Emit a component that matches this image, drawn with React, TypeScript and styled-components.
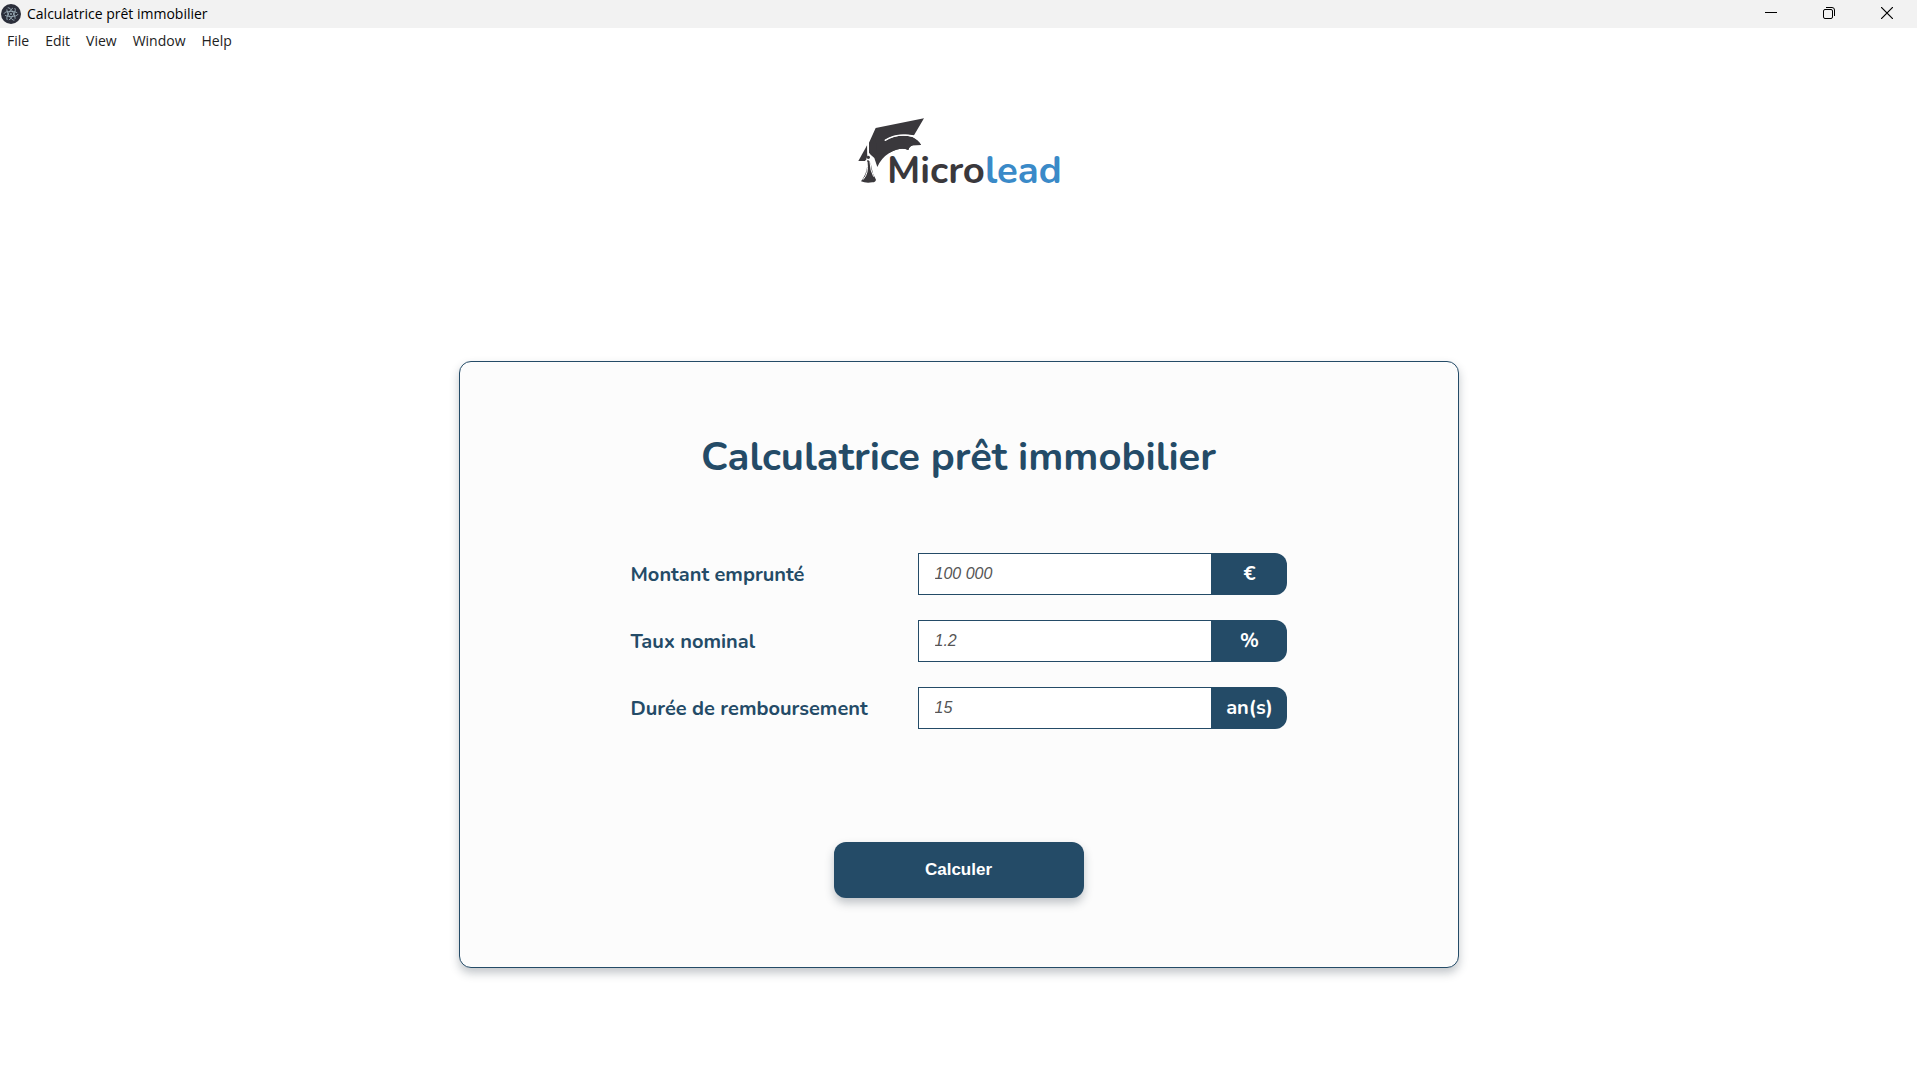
import React from "react";
import styled, { createGlobalStyle } from "styled-components";

const navy = "#244b67";
const display = `Nunito, "Noto Sans", sans-serif`;
const system = `"Segoe UI", "Open Sans", sans-serif`;

const GlobalStyle = createGlobalStyle`
  *, *::before, *::after { box-sizing: border-box; }
  body { margin: 0; background: #fff; }
  svg { display: block; }
`;

const TitleBar = styled.header`
  display: flex;
  align-items: center;
  justify-content: space-between;
  height: 28px;
  background: #f2f2f2;
  color: #000;
  font: 14px/20px ${system};
`;

const WindowTitle = styled.div`
  display: flex;
  align-items: center;
  gap: 6px;
  padding-left: 1px;
`;

const WindowControls = styled.div`
  display: flex;
  padding-right: 1px;
`;

const ControlButton = styled.button`
  display: grid;
  place-items: center;
  width: 58px;
  height: 28px;
  padding: 0 0 2px;
  border: 0;
  background: none;
`;

const MenuBar = styled.nav`
  display: flex;
  gap: 16px;
  padding: 2px 7px;
`;

const MenuButton = styled.button`
  padding: 0;
  border: 0;
  background: none;
  color: #222;
  font: 14px/22px ${system};
`;

const Page = styled.main`
  display: flex;
  flex-direction: column;
  align-items: center;
  padding: 58px 24px 48px;
`;

const Card = styled.section`
  display: flex;
  flex-direction: column;
  align-items: center;
  width: 100%;
  max-width: 1000px;
  margin-top: 157px;
  padding: 65px 24px 69px;
  border: 1px solid ${navy};
  border-radius: 12px;
  background: #fcfcfc;
  box-shadow: 0 5px 10px rgba(36, 50, 66, 0.28);
`;

const Heading = styled.h1`
  margin: 0;
  color: ${navy};
  font: 700 40px/60px ${display};
`;

const Form = styled.form`
  display: flex;
  flex-direction: column;
  align-items: center;
  margin-top: 66px;
`;

const Fields = styled.div`
  display: grid;
  gap: 25px;
`;

const Field = styled.div`
  display: grid;
  grid-template-columns: 237px 369px;
  column-gap: 50px;
  align-items: center;
`;

const Label = styled.label`
  padding-top: 2px;
  color: ${navy};
  font: 700 20px/28px ${display};
  white-space: nowrap;
`;

const InputGroup = styled.div`
  display: flex;
  height: 42px;
`;

const Input = styled.input`
  flex: 1;
  min-width: 0;
  padding: 0 16px;
  border: 1px solid ${navy};
  border-right: 0;
  border-radius: 0;
  background: #fff;
  font: italic 16px/20px "Liberation Sans", Arial, sans-serif;
  &::placeholder { color: #555; opacity: 1; }
`;

const Unit = styled.span`
  display: grid;
  place-items: center;
  width: 76px;
  padding-left: 2px;
  border-radius: 0 12px 12px 0;
  background: ${navy};
  color: #fff;
  font: 700 20px/28px ${display};
`;

const Submit = styled.button`
  width: 250px;
  height: 56px;
  margin-top: 113px;
  padding: 0;
  border: 0;
  border-radius: 12px;
  background: ${navy};
  color: #fff;
  font: 700 17px/20px "Liberation Sans", Arial, sans-serif;
  box-shadow: 0 5px 10px rgba(36, 50, 66, 0.28);
`;

const AppIcon = () => (
  <svg width="20" height="20" viewBox="0 0 20 20" aria-hidden="true">
    <circle cx="10" cy="10" r="10" fill="#2b2e3a" />
    <g fill="none" stroke="#9fb3bd" strokeWidth="0.8" strokeDasharray="14 2">
      <ellipse cx="10" cy="10" rx="7" ry="2.6" />
      <ellipse cx="10" cy="10" rx="7" ry="2.6" transform="rotate(60 10 10)" />
      <ellipse cx="10" cy="10" rx="7" ry="2.6" transform="rotate(120 10 10)" />
    </g>
    <circle cx="10" cy="10" r="0.9" fill="#9fb3bd" />
  </svg>
);

const Logo = () => (
  <svg width="207" height="92" viewBox="0 0 621 276" role="img" aria-label="Microlead">
    <g fill="#3a383c">
      <path d="M62 48 207 19 177 70Q128 62 90 84Q80 92 66 111Q92 88 125 80Q155 72 170 76Q190 84 198 99L174 100Q162 104 160 114Q136 104 104 122Q78 138 67 165L58 138L47 128L42 122V92Z" />
      <path d="M60 60 90 87Q130 64 172 75Q190 84 198 99L174 100Q162 104 160 114Q136 104 104 122L66 125Z" />
      <path d="M37 98V130L34 142L30 147H10Z" />
      <path d="M37 144Q46 144 50 168Q52 184 63 203Q61 211 52 211Q32 214 18 208Q34 188 36 166Z" />
      <circle cx="40" cy="136" r="5" />
    </g>
    <path d="M38 96 39 128M45 150Q46 176 56 194M36 150Q42 184 24 203" fill="none" stroke="#fff" strokeWidth="3" />
    <path d="M90 85Q125 62 176 73" fill="none" stroke="#fff" strokeWidth="4" />
    <text x="96" y="213" fontFamily={display} fontWeight="700" fontSize="115" fill="#3a383c">
      Micro<tspan fill="#3a8ac8">lead</tspan>
    </text>
  </svg>
);

const fields = [
  { id: "amount", label: "Montant emprunté", placeholder: "100 000", unit: "€" },
  { id: "rate", label: "Taux nominal", placeholder: "1.2", unit: "%" },
  { id: "duration", label: "Durée de remboursement", placeholder: "15", unit: "an(s)" },
];

export default function App() {
  return (
    <>
      <GlobalStyle />
      <TitleBar>
        <WindowTitle>
          <AppIcon />
          <span>Calculatrice prêt immobilier</span>
        </WindowTitle>
        <WindowControls>
          <ControlButton aria-label="Minimize">
            <svg width="12" height="12" viewBox="0 0 12 12"><path d="M0 5.500H12" stroke="#000" /></svg>
          </ControlButton>
          <ControlButton aria-label="Restore">
            <svg width="12" height="12" viewBox="0 0 12 12" fill="none" stroke="#000">
              <rect x="0.500" y="2.500" width="9" height="9" rx="1.500" />
              <path d="M3 .5H9Q11.500 .5 11.500 3V9" />
            </svg>
          </ControlButton>
          <ControlButton aria-label="Close">
            <svg width="12" height="12" viewBox="0 0 12 12"><path d="M0 0 12 12M12 0 0 12" stroke="#000" strokeWidth="1.200" /></svg>
          </ControlButton>
        </WindowControls>
      </TitleBar>
      <MenuBar>
        {["File", "Edit", "View", "Window", "Help"].map((name) => (
          <MenuButton key={name}>{name}</MenuButton>
        ))}
      </MenuBar>
      <Page>
        <Logo />
        <Card>
          <Heading>Calculatrice prêt immobilier</Heading>
          <Form onSubmit={(event) => event.preventDefault()}>
            <Fields>
              {fields.map((field) => (
                <Field key={field.id}>
                  <Label htmlFor={field.id}>{field.label}</Label>
                  <InputGroup>
                    <Input id={field.id} placeholder={field.placeholder} />
                    <Unit>{field.unit}</Unit>
                  </InputGroup>
                </Field>
              ))}
            </Fields>
            <Submit type="submit">Calculer</Submit>
          </Form>
        </Card>
      </Page>
    </>
  );
}
